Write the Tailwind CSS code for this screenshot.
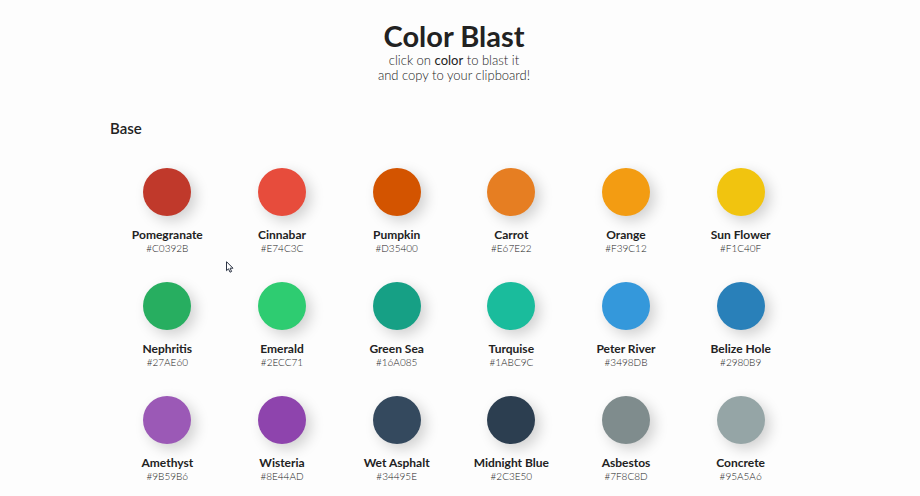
<!DOCTYPE html>
<html lang="en">
<head>
<meta charset="utf-8">
<meta name="viewport" content="width=device-width, initial-scale=1">
<title>Color Blast</title>
<script src="https://cdn.jsdelivr.net/npm/@tailwindcss/browser@4"></script>
</head>
<body class="bg-[#fdfdfd] pr-3 font-[Lato,sans-serif] text-[#222]">
<div class="px-[110px] pt-[18px]">
  <header class="text-center">
    <h1 class="text-[29px] leading-[35px] font-bold">Color Blast</h1>
    <p class="text-[13px] leading-[15px] font-light">click on <b class="font-normal">color</b> to blast it<br>and copy to your clipboard!</p>
  </header>
  <main class="pt-[35px]">
    <h2 class="text-[15px] leading-5 font-semibold">Base</h2>
    <ul id="grid" class="grid grid-cols-6 gap-y-7 pt-[30px]"></ul>
  </main>
</div>
<svg class="pointer-events-none absolute top-[261px] left-[226px]" width="8" height="12" viewBox="0 0 8 12" aria-hidden="true">
  <path d="M.5.7v9l2-1.9 1.5 3.4 1.6-.7-1.5-3.3H7Z" fill="#fff" stroke="#2c3444" stroke-width="1"/>
</svg>
<script>
const colors = [
  ["Pomegranate", "#C0392B"], ["Cinnabar", "#E74C3C"], ["Pumpkin", "#D35400"],
  ["Carrot", "#E67E22"], ["Orange", "#F39C12"], ["Sun Flower", "#F1C40F"],
  ["Nephritis", "#27AE60"], ["Emerald", "#2ECC71"], ["Green Sea", "#16A085"],
  ["Turquise", "#1ABC9C"], ["Peter River", "#3498DB"], ["Belize Hole", "#2980B9"],
  ["Amethyst", "#9B59B6"], ["Wisteria", "#8E44AD"], ["Wet Asphalt", "#34495E"],
  ["Midnight Blue", "#2C3E50"], ["Asbestos", "#7F8C8D"], ["Concrete", "#95A5A6"]
];
const grid = document.getElementById("grid");
grid.innerHTML = colors.map(([name, hex]) => `
  <li class="flex flex-col items-center text-center">
    <button type="button" aria-label="Copy ${name}" data-hex="${hex}" style="background-color:${hex}" class="size-12 cursor-pointer rounded-full shadow-[5px_5px_14px_rgba(0,0,0,0.18)]"></button>
    <h3 class="pt-3 text-[12px] leading-[14px] font-bold">${name}</h3>
    <p class="text-[10px] leading-3 font-light">${hex}</p>
  </li>`).join("");
grid.addEventListener("click", e => {
  const button = e.target.closest("button");
  if (button) navigator.clipboard?.writeText(button.dataset.hex);
});
</script>
</body>
</html>
